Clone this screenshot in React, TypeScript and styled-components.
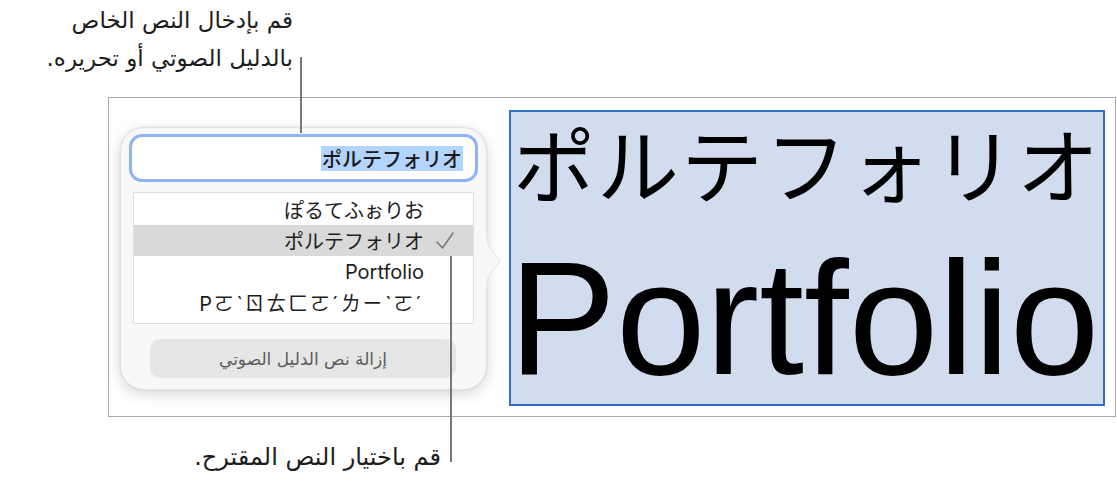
import React from "react";
import styled, { createGlobalStyle } from "styled-components";

const Global = createGlobalStyle`
  html, body { margin: 0; padding: 0; background: #fff; }
  body { font-family: "Noto Sans", "DejaVu Sans", sans-serif; }
`;

const ARABIC = `"DejaVu Sans", "Noto Sans", sans-serif`;
const CJK = `"Noto Sans CJK JP", "Noto Sans CJK TC", sans-serif`;

const Page = styled.div`
  position: relative;
  width: 1117px;
  height: 481px;
  overflow: hidden;
`;

const Caption = styled.div<{ $right: number; $size: number }>`
  width: ${(p) => p.$right}px;
  direction: rtl;
  text-align: right;
  font-family: ${ARABIC};
  font-size: ${(p) => p.$size}px;
  line-height: 38px;
  color: #1d1d1d;
  white-space: nowrap;
`;

const TopCaption = styled(Caption)`
  height: 97px;
  padding-top: 1px;
  box-sizing: border-box;
`;

const BottomCaption = styled(Caption)`
  margin-top: 20px;
  line-height: 40px;
`;

const Frame = styled.div`
  margin-left: 108px;
  width: 1008px;
  height: 320px;
  box-sizing: border-box;
  border: 1px solid #a9a9a9;
  display: flex;
  align-items: flex-start;
  gap: 22px;
  padding: 12px 10px 0 11px;
`;

const Popover = styled.div`
  position: relative;
  margin-top: 17px;
  width: 368px;
  height: 263px;
  box-sizing: border-box;
  background: #f8f8f8;
  border: 1px solid #e2e2e2;
  border-radius: 24px;
  box-shadow: 0 4px 14px rgba(0, 0, 0, 0.16), 0 0 2px rgba(0, 0, 0, 0.08);
  padding: 6px 8px 0 8px;
  display: flex;
  flex-direction: column;
`;

const Arrow = styled.svg`
  position: absolute;
  right: -16px;
  top: 106px;
`;

const Field = styled.div`
  height: 48px;
  box-sizing: border-box;
  border: 3px solid #8db4f5;
  border-radius: 13px;
  background: #fff;
  display: flex;
  align-items: center;
  justify-content: flex-end;
  padding-right: 12px;
  font-family: ${CJK};
  font-size: 20px;
  font-weight: 500;
  color: #1a1a1a;
`;

const Highlight = styled.span`
  background: #b3d4fc;
  line-height: 25px;
  padding: 0 1px;
`;

const List = styled.div`
  margin: 10px 4px 0 4px;
  height: 132px;
  box-sizing: border-box;
  background: #fff;
  border: 1px solid #e0e0e0;
  padding-top: 1px;
`;

const Row = styled.div<{ $selected?: boolean; $spaced?: boolean }>`
  height: 31px;
  display: flex;
  align-items: center;
  justify-content: flex-end;
  padding-right: 49px;
  position: relative;
  background: ${(p) => (p.$selected ? "#d9d9d9" : "transparent")};
  font-family: "Inter", ${CJK};
  font-size: 20px;
  font-weight: 400;
  letter-spacing: ${(p) => (p.$spaced ? "1.8px" : "0")};
  color: #1e1e1e;
  white-space: nowrap;
`;

const Check = styled.svg`
  position: absolute;
  right: 18px;
  top: 6px;
`;

const RemoveButton = styled.div`
  margin: 15px 22px 0 21px;
  height: 39px;
  border-radius: 10px;
  background: #e6e6e6;
  display: flex;
  align-items: center;
  justify-content: center;
  direction: rtl;
  font-family: ${ARABIC};
  font-size: 17px;
  color: #5c5c5c;
`;

const Canvas = styled.div`
  width: 596px;
  height: 296px;
  box-sizing: border-box;
  background: #d1dcee;
  border: 2px solid #3370c4;
  display: flex;
  flex-direction: column;
  align-items: center;
`;

const BigKana = styled.div`
  margin-top: 9px;
  font-family: ${CJK};
  font-size: 82px;
  line-height: 82px;
  letter-spacing: 2px;
  white-space: nowrap;
  color: #000;
`;

const BigLatin = styled.div`
  margin-top: 35px;
  margin-right: 6px;
  font-family: "Liberation Sans", Arial, sans-serif;
  font-size: 161px;
  line-height: 160px;
  white-space: nowrap;
  color: #000;
`;

const Leader = styled.div<{ $h: number }>`
  position: absolute;
  width: 2px;
  height: ${(p) => p.$h}px;
  background: #787878;
`;

const TopLeader = styled(Leader)`
  left: 300px;
  top: 57px;
`;

const BottomLeader = styled(Leader)`
  left: 450px;
  top: 256px;
`;

export default function App() {
  return (
    <Page>
      <Global />
      <TopCaption $right={293} $size={23}>
        <div>قم بإدخال النص الخاص</div>
        <div>بالدليل الصوتي أو تحريره.</div>
      </TopCaption>
      <Frame>
        <Popover>
          <Field>
            <Highlight>ポルテフォリオ</Highlight>
          </Field>
          <List>
            <Row>ぽるてふぉりお</Row>
            <Row $selected>
              ポルテフォリオ
              <Check width="20" height="20" viewBox="0 0 20 20">
                <path d="M2 11 L7.5 17 L18 2" fill="none" stroke="#7a7a7a" strokeWidth="1.6" strokeLinecap="round" strokeLinejoin="round" />
              </Check>
            </Row>
            <Row>Portfolio</Row>
            <Row $spaced>Pㄛˋㄖㄊㄈㄛˊㄌㄧˋㄛˊ</Row>
          </List>
          <RemoveButton>إزالة نص الدليل الصوتي</RemoveButton>
          <Arrow width="17" height="54" viewBox="0 0 17 54">
            <path d="M0 1 C3 12 7 18 14 25 Q16 27 14 29 C7 36 3 42 0 53 Z" fill="#f8f8f8" stroke="#e2e2e2" strokeWidth="1" />
            <rect x="0" y="0" width="1.5" height="54" fill="#f8f8f8" />
          </Arrow>
        </Popover>
        <Canvas>
          <BigKana>ポルテフォリオ</BigKana>
          <BigLatin>Portfolio</BigLatin>
        </Canvas>
      </Frame>
      <BottomCaption $right={441} $size={24}>قم باختيار النص المقترح.</BottomCaption>
      <TopLeader $h={76} />
      <BottomLeader $h={206} />
    </Page>
  );
}
